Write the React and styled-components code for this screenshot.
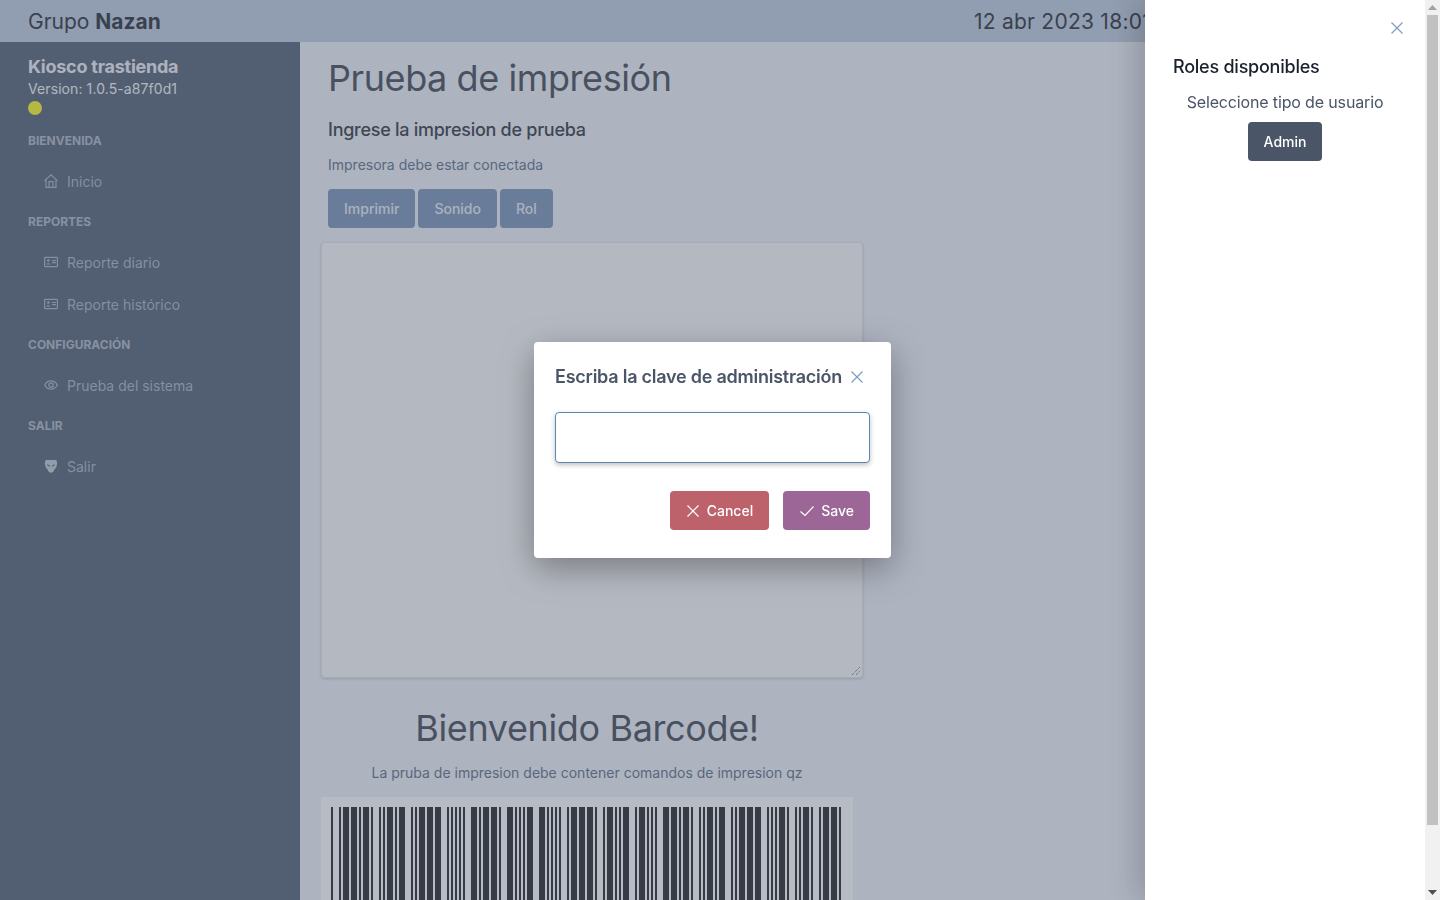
import React from "react";
import styled, { createGlobalStyle } from "styled-components";

const GlobalStyle = createGlobalStyle`
  html, body {
    margin: 0;
    padding: 0;
    font-family: Inter, "Liberation Sans", sans-serif;
    background: #eff3f9;
  }
  * { box-sizing: border-box; }
`;

const Page = styled.div`
  width: 1425px;
  height: 900px;
  overflow: hidden;
`;

const Header = styled.header`
  height: 42px;
  background: #c0cddf;
  display: flex;
  justify-content: space-between;
  align-items: center;
  padding: 0 274px 0 28px;
  font-size: 21px;
  color: #2f343d;
  white-space: nowrap;
`;

const Brand = styled.div`
  b { font-weight: 700; }
`;

const Clock = styled.div`
  letter-spacing: 0.25px;
`;

const Body = styled.div`
  display: flex;
`;

const Sidebar = styled.aside`
  width: 300px;
  flex: none;
  height: 858px;
  background: #576477;
  padding: 14px 28px;
`;

const AppName = styled.div`
  font-size: 18px;
  font-weight: 700;
  line-height: 22px;
  letter-spacing: -0.24px;
  color: #eef1f7;
`;

const Version = styled.div`
  font-size: 14px;
  line-height: 22px;
  letter-spacing: 0.09px;
  color: #f6f7f9;
`;

const Dot = styled.div`
  width: 14px;
  height: 14px;
  border-radius: 50%;
  background: #fff82a;
  margin-top: 1px;
`;

const SectionLabel = styled.div`
  font-size: 12px;
  font-weight: 700;
  line-height: 16px;
  color: #b0bac8;
  margin-top: ${({ $top }) => $top}px;
`;

const NavItem = styled.div`
  display: flex;
  align-items: center;
  gap: 9px;
  height: 42px;
  padding-left: 16px;
  font-size: 14px;
  color: #a5b7cd;
  margin-top: ${({ $top }) => $top || 0}px;
  svg { flex: none; }
`;

const Main = styled.main`
  flex: 1;
  padding: 14px 0 0 21px;
`;

const Title = styled.h1`
  margin: 0 0 0 7px;
  font-size: 36px;
  font-weight: 400;
  line-height: 44px;
  letter-spacing: -0.42px;
  color: #494f5b;
`;

const Subtitle = styled.h2`
  margin: 19px 0 0 7px;
  font-size: 18px;
  font-weight: 500;
  line-height: 22px;
  letter-spacing: -0.27px;
  color: #383d47;
`;

const Hint = styled.p`
  margin: 15px 0 0 7px;
  font-size: 14px;
  line-height: 17px;
  color: #63748b;
`;

const ButtonRow = styled.div`
  display: flex;
  gap: 3px;
  margin: 16px 0 0 7px;
`;

const ActionButton = styled.button`
  height: 39px;
  padding: 0 16px;
  border: 0;
  border-radius: 4px;
  background: #7d97ba;
  color: #e8f0f8;
  font: 500 14px Inter, sans-serif;
`;

const TextArea = styled.div`
  position: relative;
  width: 542px;
  height: 436px;
  margin-top: 14px;
  background: #fbfbfc;
  border: 1px solid #e2e8f0;
  border-radius: 4px;
  box-shadow: 0 1px 3px rgba(0, 0, 0, 0.18);
`;

const ResizeGrip = styled.svg`
  position: absolute;
  right: 1px;
  bottom: 1px;
`;

const BarcodeBlock = styled.section`
  width: 532px;
  text-align: center;
`;

const BarcodeTitle = styled.h2`
  margin: 28px 0 0 0;
  font-size: 36px;
  font-weight: 400;
  line-height: 44px;
  letter-spacing: -0.37px;
  color: #494f5b;
`;

const BarcodeHint = styled.p`
  margin: 14px 0 0;
  font-size: 14px;
  line-height: 17px;
  color: #63748b;
`;

const BarcodeBox = styled.div`
  margin-top: 16px;
  background: #fff;
  padding: 10px;
  height: 160px;
`;

const Overlay = styled.div`
  position: fixed;
  top: 0;
  left: 0;
  bottom: 0;
  right: 15px;
  background: rgba(74, 85, 104, 0.4);
`;

const ScrollTrack = styled.div`
  position: fixed;
  top: 0;
  right: 0;
  bottom: 0;
  width: 15px;
  background: #f1f1f1;
  display: flex;
  flex-direction: column;
  align-items: center;
  justify-content: space-between;
`;

const ScrollArrow = styled.div`
  height: 15px;
  display: flex;
  align-items: center;
  color: ${({ $dim }) => ($dim ? "#a3a3a3" : "#505050")};
`;

const ScrollThumb = styled.div`
  position: absolute;
  top: 15px;
  left: 2px;
  width: 11px;
  height: 810px;
  background: #c1c1c1;
`;

const Drawer = styled.aside`
  position: fixed;
  top: 0;
  right: 15px;
  bottom: 0;
  width: 280px;
  background: #fff;
  padding: 56px 28px 0;
  box-shadow: -8px 0 28px rgba(0, 0, 0, 0.18);
`;

const CloseIcon = styled.button`
  padding: 0;
  border: 0;
  background: none;
  color: #7c9cc0;
  display: flex;
  line-height: 0;
`;

const DrawerClose = styled(CloseIcon)`
  position: absolute;
  top: 21px;
  right: 21px;
`;

const DrawerTitle = styled.h3`
  margin: 0;
  font-size: 18px;
  font-weight: 500;
  line-height: 22px;
  letter-spacing: -0.24px;
  color: #1a202c;
`;

const DrawerBody = styled.div`
  display: flex;
  flex-direction: column;
  align-items: center;
  margin-top: 15px;
`;

const DrawerText = styled.p`
  margin: 0 0 10px;
  font-size: 16px;
  line-height: 19px;
  letter-spacing: -0.15px;
  color: #4a5568;
`;

const AdminButton = styled.button`
  height: 39px;
  padding: 0 16px;
  border: 0;
  border-radius: 4px;
  background: #4a5568;
  color: #fff;
  font: 500 14px Inter, sans-serif;
`;

const Modal = styled.div`
  position: fixed;
  left: 534px;
  top: 342px;
  width: 357px;
  height: 216px;
  padding: 21px;
  background: #fff;
  border-radius: 4px;
  box-shadow: 0 10px 34px rgba(0, 0, 0, 0.34);
`;

const ModalHeader = styled.div`
  display: flex;
  align-items: center;
  gap: 8px;
  height: 28px;
`;

const ModalTitle = styled.h3`
  margin: 0;
  font-size: 18px;
  font-weight: 600;
  line-height: 28px;
  letter-spacing: -0.24px;
  color: #4a5568;
  white-space: nowrap;
`;

const KeyInput = styled.input`
  display: block;
  width: 315px;
  height: 51px;
  margin-top: 21px;
  border: 1px solid #5d86b8;
  border-radius: 4px;
  outline: none;
  background: #fff;
  box-shadow: 0 2px 5px rgba(0, 0, 0, 0.25);
`;

const ModalFooter = styled.div`
  display: flex;
  justify-content: flex-end;
  gap: 14px;
  margin-top: 28px;
`;

const ModalButton = styled.button`
  display: flex;
  align-items: center;
  gap: ${({ $gap }) => $gap}px;
  height: 39px;
  padding: 0 16px;
  border: 0;
  border-radius: 4px;
  background: ${({ $bg }) => $bg};
  color: #fff;
  font: 500 14px Inter, sans-serif;
`;

const HomeIcon = () => (
  <svg width="14" height="14" viewBox="0 0 14 14" fill="none" stroke="currentColor" strokeWidth="1.2">
    <path d="M.4 6.9 7 .9l6.6 6M2 5.6v7.8h10V5.6M5 13.4V7.6h4v5.8" />
  </svg>
);

const CardIcon = () => (
  <svg width="14" height="14" viewBox="0 0 14 14" fill="none" stroke="currentColor" strokeWidth="1.2">
    <rect x=".6" y="2.4" width="12.8" height="9.2" rx=".5" />
    <circle cx="4.3" cy="5.5" r="1.3" fill="currentColor" stroke="none" />
    <path d="M2.2 9.6c.3-1.8 3.9-1.8 4.2 0z" fill="currentColor" stroke="none" />
    <path d="M8 5.5h4M8 7.6h4" />
  </svg>
);

const EyeIcon = () => (
  <svg width="14" height="14" viewBox="0 0 14 14" fill="none" stroke="currentColor" strokeWidth="1.3">
    <path d="M.7 7C2.1 4.3 4.3 2.9 7 2.9s4.9 1.4 6.3 4.1c-1.4 2.7-3.6 4.1-6.3 4.1S2.1 9.7.7 7z" />
    <circle cx="7" cy="7" r="2.2" />
  </svg>
);

const MaskIcon = () => (
  <svg width="14" height="14" viewBox="0 0 14 14" fill="#c4cbd6">
    <path
      fillRule="evenodd"
      d="M1.6 1h10.8l.8 3.4-1 4.2-1.6 1.6-1 2.4L7 14l-2.6-1.4-1-2.4L1.8 8.6l-1-4.2zM3 5.2l3 1.4v1.2L3.4 6.6zM11 5.2 8 6.6v1.2l2.6-1.2z"
    />
  </svg>
);

const XIcon = ({ size = 14 }) => (
  <svg width={size} height={size} viewBox="0 0 14 14" fill="none" stroke="currentColor" strokeWidth="1.2">
    <path d="M1.5 1.5l11 11M12.5 1.5l-11 11" />
  </svg>
);

const CheckIcon = () => (
  <svg width="16" height="14" viewBox="0 0 16 14" fill="none" stroke="currentColor" strokeWidth="1.2">
    <path d="M1.5 7.5l4.5 4L14.5 2.5" />
  </svg>
);

const UpArrow = () => (
  <svg width="9" height="5" viewBox="0 0 9 5" fill="currentColor">
    <path d="M4.5 0 9 5H0z" />
  </svg>
);

const DownArrow = () => (
  <svg width="9" height="5" viewBox="0 0 9 5" fill="currentColor">
    <path d="M0 0h9L4.5 5z" />
  </svg>
);

// bar start and width, read off the reference, in page pixels from x=331
const BARS = [
  [331, 2], [339, 2], [343, 6], [351, 6], [359, 2], [363, 6], [371, 2], [379, 2], [383, 2], [387, 6],
  [395, 2], [399, 6], [411, 2], [415, 2], [419, 6], [427, 6], [435, 6], [447, 2], [451, 2], [455, 2],
  [459, 2], [463, 2], [471, 6], [479, 2], [483, 6], [491, 6], [499, 2], [507, 6], [515, 2], [519, 2],
  [523, 2], [527, 6], [539, 6], [547, 2], [551, 2], [555, 2], [559, 2], [567, 2], [571, 6], [579, 6],
  [587, 6], [595, 2], [603, 2], [607, 6], [615, 2], [619, 2], [623, 6], [635, 2], [639, 6], [647, 2],
  [651, 2], [655, 2], [663, 6], [671, 6], [679, 2], [683, 6], [691, 2], [699, 2], [703, 2], [707, 6],
  [715, 2], [719, 6], [731, 2], [735, 2], [739, 6], [747, 6], [755, 6], [767, 2], [771, 2], [775, 2],
  [779, 6], [787, 2], [795, 2], [799, 2], [803, 6], [811, 2], [819, 2], [823, 6], [831, 6], [839, 2],
];

const Barcode = () => (
  <svg width="512" height="140" viewBox="331 0 512 140">
    {BARS.map(([x, w]) => (
      <rect key={x} x={x} y="0" width={w} height="140" fill="#2a2b2f" />
    ))}
  </svg>
);

export default function App() {
  return (
    <>
      <GlobalStyle />
      <Page>
        <Header>
          <Brand>
            Grupo <b>Nazan</b>
          </Brand>
          <Clock>12 abr 2023 18:01</Clock>
        </Header>
        <Body>
          <Sidebar>
            <AppName>Kiosco trastienda</AppName>
            <Version>Version: 1.0.5-a87f0d1</Version>
            <Dot />
            <SectionLabel $top={18}>BIENVENIDA</SectionLabel>
            <NavItem $top={11}>
              <HomeIcon />
              Inicio
            </NavItem>
            <SectionLabel $top={12}>REPORTES</SectionLabel>
            <NavItem $top={11}>
              <CardIcon />
              Reporte diario
            </NavItem>
            <NavItem>
              <CardIcon />
              Reporte histórico
            </NavItem>
            <SectionLabel $top={12}>CONFIGURACIÓN</SectionLabel>
            <NavItem $top={11}>
              <EyeIcon />
              Prueba del sistema
            </NavItem>
            <SectionLabel $top={12}>SALIR</SectionLabel>
            <NavItem $top={11}>
              <MaskIcon />
              Salir
            </NavItem>
          </Sidebar>
          <Main>
            <Title>Prueba de impresión</Title>
            <Subtitle>Ingrese la impresion de prueba</Subtitle>
            <Hint>Impresora debe estar conectada</Hint>
            <ButtonRow>
              <ActionButton>Imprimir</ActionButton>
              <ActionButton>Sonido</ActionButton>
              <ActionButton>Rol</ActionButton>
            </ButtonRow>
            <TextArea>
              <ResizeGrip width="10" height="10" viewBox="0 0 10 10" stroke="#555" strokeDasharray="1 1">
                <path d="M1 9l8-8M5 9l4-4" />
              </ResizeGrip>
            </TextArea>
            <BarcodeBlock>
              <BarcodeTitle>Bienvenido Barcode!</BarcodeTitle>
              <BarcodeHint>La pruba de impresion debe contener comandos de impresion qz</BarcodeHint>
              <BarcodeBox>
                <Barcode />
              </BarcodeBox>
            </BarcodeBlock>
          </Main>
        </Body>
      </Page>
      <Overlay />
      <Drawer>
        <DrawerClose>
          <XIcon />
        </DrawerClose>
        <DrawerTitle>Roles disponibles</DrawerTitle>
        <DrawerBody>
          <DrawerText>Seleccione tipo de usuario</DrawerText>
          <AdminButton>Admin</AdminButton>
        </DrawerBody>
      </Drawer>
      <ScrollTrack>
        <ScrollArrow $dim>
          <UpArrow />
        </ScrollArrow>
        <ScrollThumb />
        <ScrollArrow>
          <DownArrow />
        </ScrollArrow>
      </ScrollTrack>
      <Modal>
        <ModalHeader>
          <ModalTitle>Escriba la clave de administración</ModalTitle>
          <CloseIcon>
            <XIcon />
          </CloseIcon>
        </ModalHeader>
        <KeyInput />
        <ModalFooter>
          <ModalButton $bg="#bd616a" $gap={7}>
            <XIcon />
            Cancel
          </ModalButton>
          <ModalButton $bg="#9c6696" $gap={6}>
            <CheckIcon />
            Save
          </ModalButton>
        </ModalFooter>
      </Modal>
    </>
  );
}
